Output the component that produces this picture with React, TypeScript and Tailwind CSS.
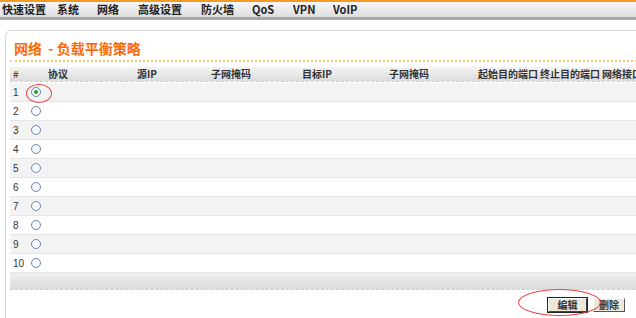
import React from 'react';

const navItems = [
  { label: '快速设置', w: 'w-[55px]' },
  { label: '系统', w: 'w-[40px]' },
  { label: '网络', w: 'w-[41px]' },
  { label: '高级设置', w: 'w-[63px]' },
  { label: '防火墙', w: 'w-[51px]' },
  { label: 'QoS', w: 'w-[41px]' },
  { label: 'VPN', w: 'w-[40px]' },
  { label: 'VoIP', w: 'w-[40px]' },
];

// column widths follow the header positions in the screenshot
const columns = [
  { label: '#', w: 'w-[38px]', pl: 'pl-[3px]', weight: 'font-normal' },
  { label: '协议', w: 'w-[89px]', pl: '', weight: 'font-bold' },
  { label: '源IP', w: 'w-[74px]', pl: '', weight: 'font-bold' },
  { label: '子网掩码', w: 'w-[91px]', pl: '', weight: 'font-bold' },
  { label: '目标IP', w: 'w-[87px]', pl: '', weight: 'font-bold' },
  { label: '子网掩码', w: 'w-[89px]', pl: '', weight: 'font-bold' },
  { label: '起始目的端口', w: 'w-[62px]', pl: '', weight: 'font-bold' },
  { label: '终止目的端口', w: 'w-[62px]', pl: '', weight: 'font-bold' },
  { label: '网络接口', w: 'w-[60px]', pl: '', weight: 'font-bold' },
];

const rows = [1, 2, 3, 4, 5, 6, 7, 8, 9, 10];

const Radio: React.FC<{ checked?: boolean }> = ({ checked }) => (
  <span className="flex h-[10px] w-[10px] items-center justify-center rounded-full border border-[#6b88ad] bg-[#f7f9fb]">
    {checked && <span className="h-[4px] w-[4px] rounded-full bg-[#1fa32a]" />}
  </span>
);

const App: React.FC = () => {
  return (
    <div className="relative h-[318px] w-[636px] overflow-hidden bg-white font-['Noto_Sans_CJK_SC','Liberation_Sans',sans-serif] text-[#333]">
      {/* top nav */}
      <div className="h-[2px] bg-[#f59a23]" />
      <div className="flex h-[15px] items-center bg-gradient-to-b from-[#f7f7f7] to-[#dedede] pl-[2px] text-[11px] leading-none font-bold text-[#222]">
        {navItems.map((item) => (
          <span key={item.label} className={item.w}>
            {item.label}
          </span>
        ))}
      </div>
      <div className="h-[3px] bg-[#a9a9a9]" />

      {/* panel */}
      <div className="ml-[5px] mt-[10px] h-[300px] w-[660px] rounded-tl-[6px] border-t border-l border-[#d8d8d8]">
        <div className="pl-[8px] pt-[8px] text-[14px] leading-[18px] font-bold text-[#ff6a00]">
          网络&nbsp;&nbsp;-&nbsp;负载平衡策略
        </div>
        <div className="ml-[4px] mt-[3px] border-b-2 border-dotted border-[#f6c874]" />

        <div className="ml-[4px] mt-[5px]">
          <div className="flex h-[15px] items-center border-b border-dashed border-[#d0d0d0] bg-gradient-to-b from-[#f4f4f4] to-[#dcdcdc] text-[10px] leading-none text-[#333]">
            {columns.map((c, i) => (
              <span key={i} className={`${c.w} ${c.pl} ${c.weight} shrink-0 whitespace-nowrap`}>
                {c.label}
              </span>
            ))}
          </div>

          <div className="mt-[1px]">
            {rows.map((n) => (
              <div
                key={n}
                className={`flex h-[19px] items-center border-b border-[#e6e6e6] text-[10px] text-[#333] ${
                  n % 2 === 1 ? 'bg-[#f3f3f3]' : 'bg-white'
                }`}
              >
                <span className="w-[21px] pl-[3px] font-['Liberation_Sans',sans-serif]">{n}</span>
                <Radio checked={n === 1} />
              </div>
            ))}
          </div>

          <div className="h-[17px] border-b border-dashed border-[#cfcfcf] bg-gradient-to-b from-[#efefef] to-[#dcdcdc]" />

          <div className="flex gap-[6px] pl-[538px] pt-[8px] text-[10px] leading-none font-bold">
            <button className="h-[14px] w-[39px] border border-t-[#fff] border-l-[#fff] border-r-[#444] border-b-[#444] bg-[#ece9d8] shadow-[0_0_0_1px_#222]">
              编辑
            </button>
            <button className="h-[14px] w-[32px] border border-t-[#fff] border-l-[#fff] border-r-[#555] border-b-[#555] bg-[#ece9d8]">
              删除
            </button>
          </div>
        </div>
      </div>

      {/* red annotation ellipses */}
      <div className="absolute left-[26px] top-[84px] h-[19px] w-[26px] rounded-[50%] border border-[#e8434a]" />
      <div className="absolute left-[518px] top-[289px] h-[27px] w-[83px] rounded-[50%] border border-[#e8434a]" />
    </div>
  );
};

export default App;
